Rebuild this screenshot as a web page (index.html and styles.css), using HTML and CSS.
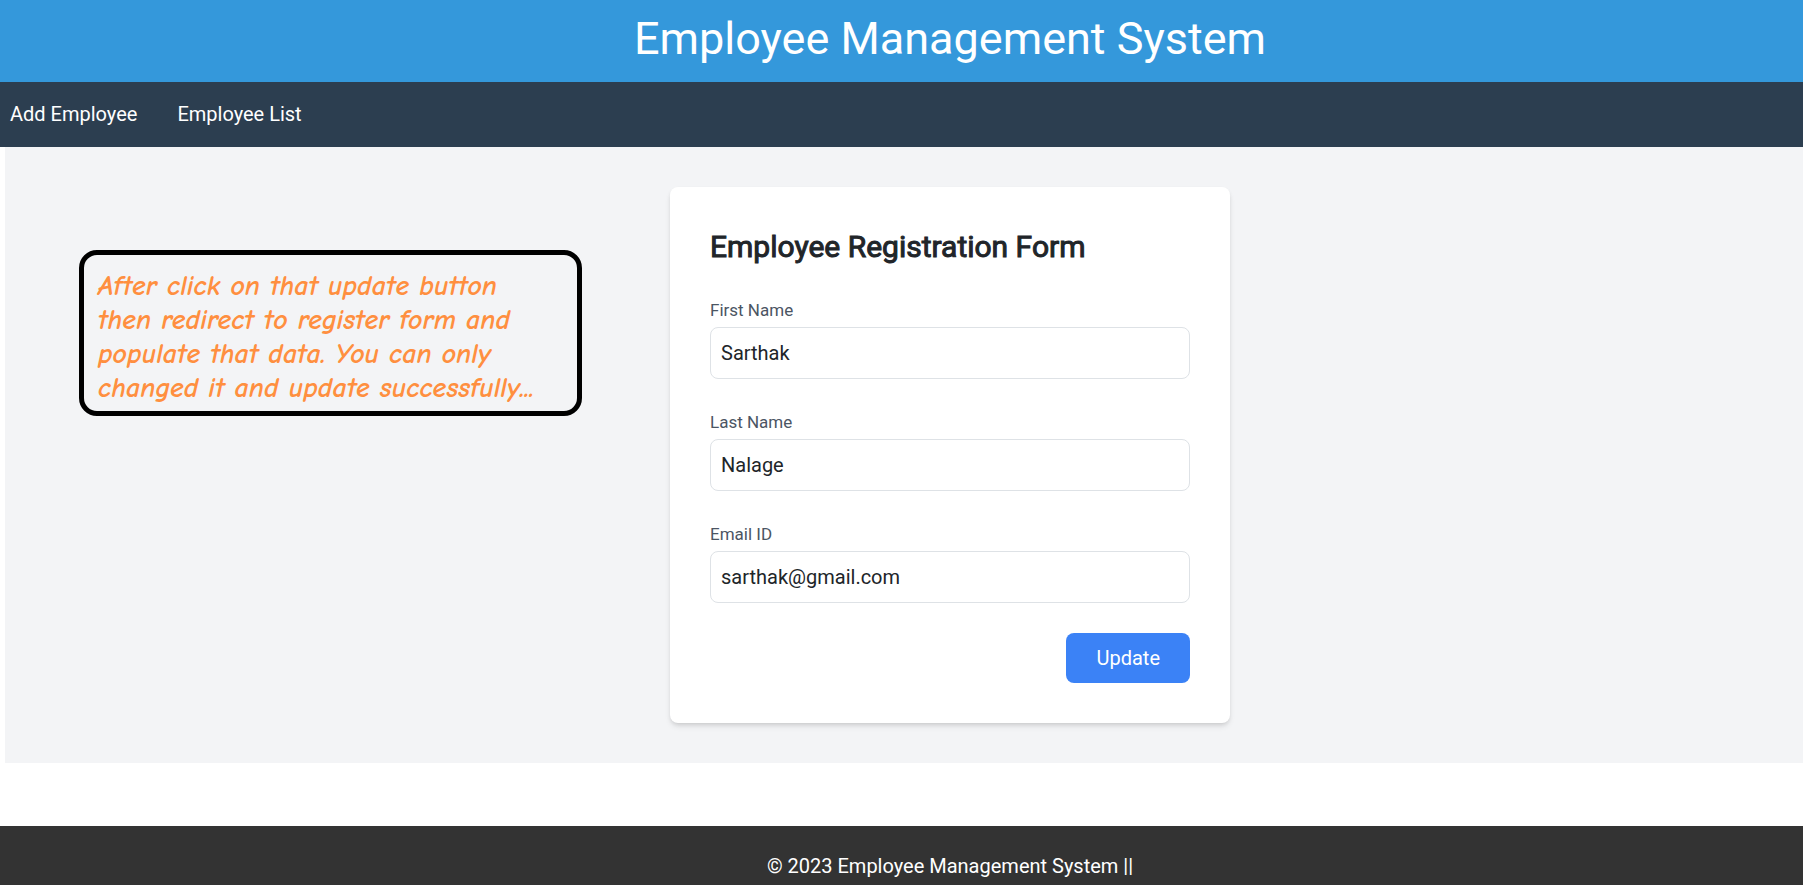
FILE: index.html
```html
<!DOCTYPE html>
<html lang="en">
<head>
<meta charset="utf-8">
<title>Employee Management System</title>
<link rel="stylesheet" href="styles.css">
</head>
<body>
<header class="site-header">
  <h1 class="site-title">Employee Management System</h1>
</header>
<nav class="site-nav">
  <a class="nav-link" href="#add">Add Employee</a>
  <a class="nav-link" href="#list">Employee List</a>
</nav>
<main class="page">
  <p class="note">After click on that update button<br>then redirect to register form and<br>populate that data. You can only<br>changed it and update successfully...</p>
  <form class="card">
    <h2 class="card-title">Employee Registration Form</h2>
    <div class="field">
      <label class="field-label" for="first">First Name</label>
      <input class="field-input" id="first" type="text" value="Sarthak">
    </div>
    <div class="field">
      <label class="field-label" for="last">Last Name</label>
      <input class="field-input" id="last" type="text" value="Nalage">
    </div>
    <div class="field">
      <label class="field-label" for="email">Email ID</label>
      <input class="field-input" id="email" type="email" value="sarthak@gmail.com">
    </div>
    <button class="submit" type="button">Update</button>
  </form>
</main>
<footer class="site-footer">© 2023 Employee Management System ||</footer>
</body>
</html>
```
FILE: styles.css
```css
:root {
  --lead: 97px;
}
* {
  box-sizing: border-box;
}
body {
  margin: 0;
  min-height: 100vh;
  display: flex;
  flex-direction: column;
  background: #fff;
  color: #212529;
  font: 20px/30px Roboto, "Liberation Sans", sans-serif;
}
.site-header {
  padding: 11px 0 15px var(--lead);
  background: #3498db;
  color: #fff;
  text-align: center;
}
.site-title {
  margin: 0;
  font-size: 45px;
  font-weight: 400;
  line-height: 56px;
}
.site-nav {
  display: flex;
  gap: 40px;
  padding: 17px 10px 18px;
  background: #2c3e50;
}
.nav-link {
  color: #fff;
  text-decoration: none;
}
.page {
  position: relative;
  display: flex;
  justify-content: center;
  margin-left: 5px;
  padding: 40px 0 40px calc(var(--lead) - 5px);
  background: #f3f4f6;
}
.card {
  display: flex;
  flex-direction: column;
  width: 560px;
  padding: 40px;
  border-radius: 8px;
  background: #fff;
  box-shadow: 0 4px 6px -1px rgba(0, 0, 0, 0.1), 0 2px 4px -1px rgba(0, 0, 0, 0.1);
}
.card-title {
  margin: 0 0 30px;
  font-size: 30px;
  font-weight: 400;
  line-height: 40px;
  -webkit-text-stroke: 1px currentColor;
}
.field {
  display: flex;
  flex-direction: column;
  gap: 4px;
  margin-bottom: 30px;
}
.field-label {
  color: #4b5563;
  font-size: 17px;
  line-height: 26px;
}
.field-input {
  width: 100%;
  height: 52px;
  padding: 0 10px;
  border: 1px solid #dee2e6;
  border-radius: 8px;
  background: #fff;
  color: #212529;
  font: inherit;
}
.submit {
  align-self: flex-end;
  padding: 10px 30px;
  border: 0;
  border-radius: 8px;
  background: #3b82f6;
  color: #fff;
  font: inherit;
}
.note {
  position: absolute;
  top: 103px;
  left: 74px;
  width: 503px;
  margin: 0;
  padding: 14px 14px 6px;
  border: 5px solid #000;
  border-radius: 18px;
  color: #ff8f3f;
  font: italic 700 28px/34px "Comic Sans MS", "Comic Neue", "Open Sans", sans-serif;
  font-variant-ligatures: none;
}
.site-footer {
  flex: 1;
  margin-top: 63px;
  padding: 25px 0 4px var(--lead);
  background: #333;
  color: #fff;
  text-align: center;
}
```
